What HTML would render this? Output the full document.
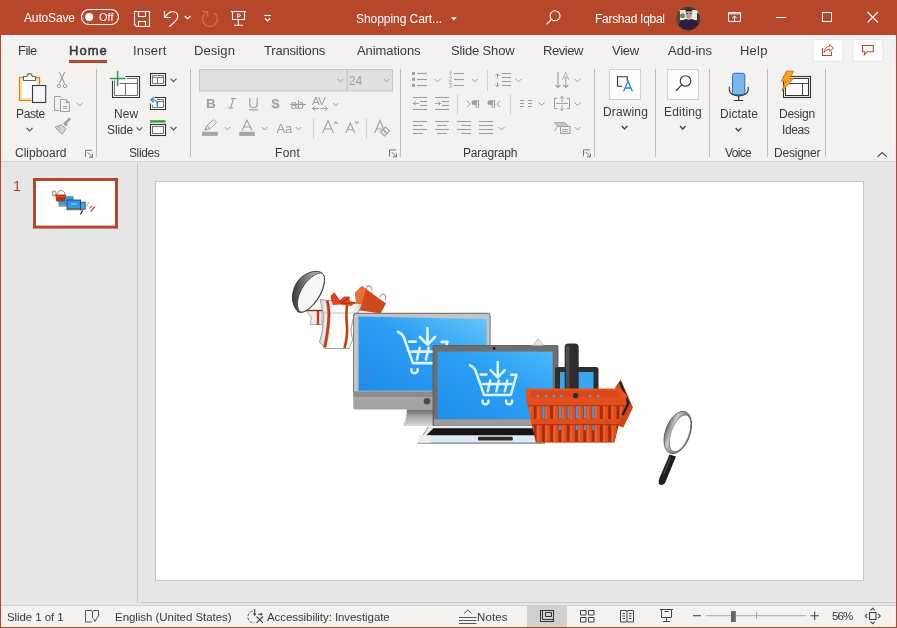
<!DOCTYPE html>
<html><head><meta charset="utf-8">
<style>
*{margin:0;padding:0;box-sizing:border-box}
html,body{width:897px;height:628px;overflow:hidden;background:#B7472A;font-family:"Liberation Sans",sans-serif}
.t{position:absolute;white-space:pre;line-height:1;will-change:transform}
svg{position:absolute;left:0;top:0;will-change:transform}
</style></head><body>
<svg width="897" height="628" viewBox="0 0 897 628">

<rect x="0" y="0" width="897" height="628" fill="#B7472A"/>
<rect x="1" y="35" width="895" height="126" fill="#F3F2F1"/>
<rect x="1" y="161" width="895" height="1" fill="#D6D4D2"/>
<rect x="1" y="162" width="895" height="443" fill="#E6E6E6"/>
<rect x="1" y="605" width="895" height="1" fill="#D2D0CE"/>
<rect x="1" y="606" width="895" height="21" fill="#F3F2F1"/>
<rect x="137" y="163" width="1" height="440" fill="#C8C8C8"/>
<rect x="140" y="602" width="756" height="1" fill="#C8C8C8"/>
<rect x="155.5" y="181.5" width="708" height="399" fill="#fff" stroke="#C6C6C6" stroke-width="1"/>


<defs>
<linearGradient id="scr1" x1="0" y1="1" x2="1" y2="0">
<stop offset="0" stop-color="#1F8BEA"/><stop offset="0.55" stop-color="#2C9EF4"/><stop offset="1" stop-color="#66C8FA"/></linearGradient>
<linearGradient id="scr2" x1="0" y1="1" x2="1" y2="0">
<stop offset="0" stop-color="#1E8EEC"/><stop offset="0.6" stop-color="#2DA0F5"/><stop offset="1" stop-color="#4CB8F8"/></linearGradient>
<linearGradient id="chin" x1="0" y1="0" x2="0" y2="1">
<stop offset="0" stop-color="#7E7E7E"/><stop offset="0.3" stop-color="#9A9A9A"/><stop offset="0.4" stop-color="#B4B4B4"/><stop offset="1" stop-color="#A2A2A2"/></linearGradient>
<linearGradient id="stand" x1="0" y1="0" x2="0" y2="1">
<stop offset="0" stop-color="#6C6C6C"/><stop offset="0.5" stop-color="#B0B0B0"/><stop offset="1" stop-color="#D8D8D8"/></linearGradient>
<linearGradient id="lid" x1="0" y1="0" x2="1" y2="0">
<stop offset="0" stop-color="#3E3E3E"/><stop offset="0.5" stop-color="#9A9A9A"/><stop offset="1" stop-color="#E8E8E8"/></linearGradient>
<linearGradient id="orng" x1="0" y1="0" x2="0" y2="1">
<stop offset="0" stop-color="#F05A22"/><stop offset="1" stop-color="#C8380F"/></linearGradient>
</defs>
<!-- gift lid (open, tilted) -->
<linearGradient id="lidg" x1="0" y1="0" x2="1" y2="0"><stop offset="0" stop-color="#3A3A3A"/><stop offset="0.5" stop-color="#8A8A8A"/><stop offset="1" stop-color="#D0D0D0"/></linearGradient>
<path d="M296 309 C289 300 293 283 303 276 C310 271 318 270 322 273 C327 277 324 290 318 299 C312 308 304 314 298 312 Z" fill="url(#lidg)" stroke="#222" stroke-width="0.8"/>
<path d="M299.5 311.5 C295.5 306 297.5 294 304.5 284.5 C310.5 276.5 318.5 271.5 322.5 273.5 C326.5 276.5 324 289 318 298 C312 307 304.5 314 299.5 311.5 Z" fill="#F7F7F7" stroke="#333" stroke-width="0.8"/>
<!-- small box piece left -->
<path d="M306.5 310.5 H322 V324.5 H310 L311.5 318 Z" fill="#EDEDED" stroke="#777" stroke-width="0.6"/>
<path d="M305.5 310.5 H322" stroke="#9A2C10" stroke-width="1.4"/>
<rect x="316.8" y="311" width="2.4" height="14" fill="#C2401A"/>
<!-- orange bag -->
<path d="M362 286 L386 303.5 L380.5 313.5 L357 310 L355 293 Z" fill="#CF4A1A"/>
<path d="M355 293 L362 286 L366 289 L360 310 L357 310 Z" fill="#EE6C36"/>
<path d="M366.5 289 C366.5 284.5 371.5 284 372 290.5 M380 297.5 C381 292.5 386.5 293 385.5 300" fill="none" stroke="#9A9A9A" stroke-width="1.1"/>
<!-- gift box -->
<linearGradient id="boxg" x1="0" y1="0" x2="1" y2="0"><stop offset="0" stop-color="#D8D8D8"/><stop offset="0.3" stop-color="#FAFAFA"/><stop offset="0.75" stop-color="#FFFFFF"/><stop offset="1" stop-color="#CFCFCF"/></linearGradient>
<path d="M320 299.5 L362 304 L358 313.5 L353 319 L351 330 L352.5 340 L349 348.5 L325 348.5 L319.5 342 L322.5 330 L323.5 315 Z" fill="url(#boxg)" stroke="#7A7A7A" stroke-width="0.7"/>
<path d="M323.5 313 H357.5" stroke="#B8B8B8" stroke-width="0.8"/>
<path d="M327 300.5 C328.5 306 329 313 328.5 320 C328 330 326 340 324.5 347.5" fill="none" stroke="#C63E16" stroke-width="2.6"/>
<path d="M347 304.5 C346.5 310 346 318 347 326 C347.5 334 346.5 341 344.5 348" fill="none" stroke="#C63E16" stroke-width="2.6"/>
<path d="M327 300.5 C328.5 306 329 313 328.5 320 C328 330 326 340 324.5 347.5" fill="none" stroke="#7A1E08" stroke-width="0.5" transform="translate(1.3 0)"/>
<path d="M330.5 296 L334 292.5 L339.5 300.5 L344 296.5 L349 296.5 L350 301 L356 302.5 L351 306 L341 304.5 L333 305 L331 300 Z" fill="#E2441C"/>
<path d="M334 292.5 L340.5 302.5 M350 297 L341 303.5 M356 302.5 L341 303.8" fill="none" stroke="#A02A0C" stroke-width="0.8"/>
<!-- monitor -->
<path d="M356 312.8 H488 Q490.5 313 490.5 316 L490 407 Q490 409.6 487 409.6 H356 Q353.2 409.6 353.2 407 V316 Q353.2 312.8 356 312.8 Z" fill="url(#chin)"/>
<path d="M355 313.5 H489 L490 316 V392 H353.5 V316 Z" fill="#C4C4C4" stroke="#707070" stroke-width="0.8"/>
<path d="M358.5 316.4 L486.5 319 L487.5 390.8 L358.5 390.8 Z" fill="url(#scr1)"/>
<path d="M353.5 392 H490 V397 H353.5 Z" fill="#8C8C8C"/>
<circle cx="427" cy="401.3" r="3.3" fill="#4A4A4A"/>
<path d="M407 409.6 H434 V426 H403 L406 418 Z" fill="url(#stand)"/>
<g transform="translate(398.1 331.9) scale(1.06) translate(-470 -365.4)" fill="none" stroke="#DDF4FF" stroke-width="2.5" stroke-linecap="round" stroke-linejoin="round">
<path d="M470 365.4 Q474.5 367 476 372 L484 394.9 H510.8 L516.5 374.8 H511"/>
<path d="M480.6 374.6 H486.6 M497.7 362 V377.5 M490.6 370.2 L497.7 377.5 L504.8 370.2 M482.8 384 H511.5 M490.3 380.4 L487.8 391.3 M498.8 380.4 L496.3 391.3 M507.3 380.4 L504.8 391.3"/>
<path d="M482.6 400.6 A3 3 0 1 0 488.4 400.6 M506.2 400.6 A3 3 0 1 0 512 400.6"/>
</g>
<!-- laptop lid -->
<rect x="433" y="345.5" width="125" height="80.5" rx="1" fill="#6E6E6E"/>
<rect x="433" y="345.5" width="125" height="80.5" rx="1" fill="none" stroke="#555" stroke-width="0.8"/>
<rect x="437.6" y="351.6" width="115" height="67.5" fill="url(#scr2)"/>
<rect x="434" y="419.2" width="123" height="6.5" fill="#9C9C9C"/>
<circle cx="494.2" cy="348.4" r="1.3" fill="#111"/>
<path d="M532.3 345.5 L538.3 338.8 L544.3 345.5 Z" fill="#E4E4E4" stroke="#9A9A9A" stroke-width="0.6"/>
<g transform="translate(470 365.4) scale(1.0) translate(-470 -365.4)" fill="none" stroke="#DDF4FF" stroke-width="2.5" stroke-linecap="round" stroke-linejoin="round">
<path d="M470 365.4 Q474.5 367 476 372 L484 394.9 H510.8 L516.5 374.8 H511"/>
<path d="M480.6 374.6 H486.6 M497.7 362 V377.5 M490.6 370.2 L497.7 377.5 L504.8 370.2 M482.8 384 H511.5 M490.3 380.4 L487.8 391.3 M498.8 380.4 L496.3 391.3 M507.3 380.4 L504.8 391.3"/>
<path d="M482.6 400.6 A3 3 0 1 0 488.4 400.6 M506.2 400.6 A3 3 0 1 0 512 400.6"/>
</g>
<!-- laptop base -->
<path d="M428.5 426 H545 V443.3 H417.8 Z" fill="#DCE9F5"/>
<path d="M417.8 443.3 L428.5 426.5" stroke="#9A9A9A" stroke-width="1"/>
<path d="M433.4 428.3 H545 V435.3 H426.4 Z" fill="#141414"/>
<path d="M428 426.6 H545" stroke="#F4F4F4" stroke-width="1.2"/>
<rect x="418" y="442.4" width="127" height="1.4" fill="#8E8E8E"/>
<rect x="477.9" y="436.8" width="35" height="3.6" rx="1.5" fill="#2A2A2A"/>
<rect x="418" y="435.3" width="13" height="7.5" fill="#EDEDED"/>
<!-- tablet behind basket -->
<rect x="555" y="367" width="43.5" height="30" rx="2.5" fill="#2E2E2E"/>
<rect x="560" y="372" width="33.5" height="25" fill="#39A6F0"/>
<!-- basket handle -->
<rect x="564.7" y="343.5" width="14" height="48" rx="4" fill="#2C2C2C"/>
<rect x="566" y="346" width="3.5" height="43" fill="#4E4E4E"/>
<!-- basket right flap -->
<path d="M615.4 387.3 L620.7 379.4 L633 407.4 L623.3 427.6 L613 424 Z" fill="#D24618"/>
<path d="M620 382 L628.5 403 L622.5 415" fill="none" stroke="#1E1E1E" stroke-width="2.4"/>
<!-- basket body -->
<clipPath id="bask"><path d="M527.5 404 H624 L614.3 442.4 H535.8 Z"/></clipPath>
<g clip-path="url(#bask)">
<rect x="520" y="400" width="110" height="45" fill="#A42E0C"/>
<rect x="542.3" y="406" width="2.4" height="12.5" fill="#3C9EEA"/><rect x="559" y="406" width="2.4" height="12.5" fill="#3C9EEA"/><rect x="567.3" y="406" width="2.4" height="12.5" fill="#3C9EEA"/><rect x="575.6" y="406" width="2.4" height="12.5" fill="#3C9EEA"/><rect x="583.9" y="406" width="2.4" height="12.5" fill="#3C9EEA"/><rect x="592.2" y="406" width="2.4" height="12.5" fill="#3C9EEA"/><rect x="559" y="425" width="2.4" height="5" fill="#3C9EEA"/><rect x="575.6" y="425" width="2.4" height="5" fill="#3C9EEA"/><rect x="583.9" y="425" width="2.4" height="5" fill="#3C9EEA"/><rect x="592.2" y="425" width="2.4" height="5" fill="#3C9EEA"/>
<rect x="528.5" y="405" width="5.4" height="37.5" fill="#E44E1C"/><rect x="529.2" y="405" width="1.6" height="37.5" fill="#F26C36" opacity="0.75"/><rect x="536.5" y="405" width="5.4" height="37.5" fill="#E44E1C"/><rect x="537.2" y="405" width="1.6" height="37.5" fill="#F26C36" opacity="0.75"/><rect x="544.8" y="405" width="5.4" height="37.5" fill="#E44E1C"/><rect x="545.5" y="405" width="1.6" height="37.5" fill="#F26C36" opacity="0.75"/><rect x="553" y="405" width="5.4" height="37.5" fill="#E44E1C"/><rect x="553.7" y="405" width="1.6" height="37.5" fill="#F26C36" opacity="0.75"/><rect x="561.3" y="405" width="5.4" height="37.5" fill="#E44E1C"/><rect x="562.0" y="405" width="1.6" height="37.5" fill="#F26C36" opacity="0.75"/><rect x="569.6" y="405" width="5.4" height="37.5" fill="#E44E1C"/><rect x="570.3000000000001" y="405" width="1.6" height="37.5" fill="#F26C36" opacity="0.75"/><rect x="577.9" y="405" width="5.4" height="37.5" fill="#E44E1C"/><rect x="578.6" y="405" width="1.6" height="37.5" fill="#F26C36" opacity="0.75"/><rect x="586.2" y="405" width="5.4" height="37.5" fill="#E44E1C"/><rect x="586.9000000000001" y="405" width="1.6" height="37.5" fill="#F26C36" opacity="0.75"/><rect x="594.5" y="405" width="5.4" height="37.5" fill="#E44E1C"/><rect x="595.2" y="405" width="1.6" height="37.5" fill="#F26C36" opacity="0.75"/><rect x="602.8" y="405" width="5.4" height="37.5" fill="#E44E1C"/><rect x="603.5" y="405" width="1.6" height="37.5" fill="#F26C36" opacity="0.75"/><rect x="611.1" y="405" width="5.4" height="37.5" fill="#E44E1C"/><rect x="611.8000000000001" y="405" width="1.6" height="37.5" fill="#F26C36" opacity="0.75"/><rect x="619.4" y="405" width="5.4" height="37.5" fill="#E44E1C"/><rect x="620.1" y="405" width="1.6" height="37.5" fill="#F26C36" opacity="0.75"/>
</g>
<path d="M525.3 388.5 H621 L627 396 L624.5 405 H527.5 Z" fill="#E65420"/>
<path d="M531 390.5 H618 L621 397.3 H529 Z" fill="#D8481A"/>
<g fill="#4AA2E8"><rect x="536.5" y="395" width="2.5" height="2"/><rect x="545" y="395" width="2.5" height="2"/><rect x="552.5" y="395" width="2.5" height="2"/><rect x="560" y="395" width="2.5" height="2"/><rect x="589" y="395" width="2.5" height="2"/><rect x="597" y="395" width="2.5" height="2"/></g>
<path d="M525.8 397.3 H626 L624 405 H527.5 Z" fill="#E24E1C"/>
<path d="M527.5 405 H624 L623.3 406.3 H528 Z" fill="#B8380F"/>
<path d="M530.5 419 H620.5 L619.3 424.2 H531.8 Z" fill="#E04C1C"/>
<path d="M531.8 424.2 H619.3 L619 425.2 H532 Z" fill="#A82E0C"/>
<circle cx="575.7" cy="395.7" r="2.6" fill="#2A2A2A"/>
<!-- magnifier bottom right -->
<linearGradient id="ringg" x1="0" y1="0" x2="1" y2="0"><stop offset="0" stop-color="#6E6E6E"/><stop offset="0.25" stop-color="#C8C8C8"/><stop offset="0.45" stop-color="#9A9A9A"/><stop offset="1" stop-color="#555"/></linearGradient>
<g transform="rotate(20 677.8 432.5)">
<ellipse cx="677.8" cy="432.5" rx="12.3" ry="22" fill="url(#ringg)" stroke="#444" stroke-width="0.7"/>
<ellipse cx="680.2" cy="432.5" rx="9" ry="19.3" fill="#fff" stroke="#666" stroke-width="0.6"/>
</g>
<path d="M669.5 454.5 L676 456.5 L665 483 Q662 486.5 659 484 Q658 481 659.5 478 Z" fill="#1E1E1E"/>
<path d="M670.5 457 L664 474" stroke="#555" stroke-width="1"/>

<rect x="81.5" y="9.5" width="37" height="15" rx="7.5" fill="none" stroke="#fff" stroke-width="1.2"/><circle cx="89.2" cy="17" r="4" fill="#fff"/><path d="M134.5 11.5 H149.5 V26.5 H136.5 L134.5 24.5 Z M138.5 11.5 V16.5 H145.5 V11.5 M138.5 26.5 V21.5 H145.5 V26.5" fill="none" stroke="#fff" stroke-width="1.1"/><path d="M164.5 11 V17.5 H171" fill="none" stroke="#fff" stroke-width="1.15"/><path d="M165 17.2 C167.5 13.5 170 11.6 172.6 11.6 C175.6 11.6 177.8 13.8 177.8 16.5 C177.8 18.6 176.6 20 175 21.6 L169.4 26.5" fill="none" stroke="#fff" stroke-width="1.15"/><path d="M184.7 16.099999999999998 L187.6 18.7 L190.5 16.099999999999998" fill="none" stroke="#fff" stroke-width="1.3"/><path d="M214.2 12.9 A7.4 7.4 0 1 1 207.3 12" fill="none" stroke="#E46A50" stroke-width="1.2"/><path d="M202.2 11.5 H207.7 V16.8" fill="none" stroke="#E46A50" stroke-width="1.2"/><path d="M231 11.5 H246 M232.5 11.5 V19.5 H244.5 V11.5 M238.3 19.5 V25.2 M234 25.2 H243" fill="none" stroke="#fff" stroke-width="1.1"/><path d="M237.6 13.6 L240.8 15.5 L237.6 17.4 Z" fill="none" stroke="#fff" stroke-width="0.9"/><path d="M264.3 15.5 H271" stroke="#fff" stroke-width="1.1"/><path d="M264.90000000000003 18.2 L267.6 20.8 L270.3 18.2" fill="none" stroke="#fff" stroke-width="1.2"/><path d="M451 17.2 H456.8 L453.9 20.4 Z" fill="#fff"/><circle cx="555" cy="15.8" r="5" fill="none" stroke="#fff" stroke-width="1.1"/><path d="M551.4 19.4 L546.5 24.3" stroke="#fff" stroke-width="1.2"/><defs><clipPath id="av"><circle cx="688.2" cy="18.5" r="11.8"/></clipPath></defs>
<g clip-path="url(#av)">
<rect x="676" y="6" width="25" height="25" fill="#4A3C30"/>
<rect x="679" y="10" width="20" height="10" fill="#E8E8E4"/>
<rect x="676" y="11" width="4" height="16" fill="#5A4632"/>
<rect x="697" y="13" width="4" height="12" fill="#3C3C38"/>
<circle cx="682.5" cy="15.8" r="2.5" fill="#6E8A5A"/>
<rect x="686" y="10" width="1" height="8" fill="#cfcfcf"/>
<ellipse cx="688.8" cy="14.8" rx="3" ry="4" fill="#B89A88"/>
<path d="M685.3 12.5 Q686 8.5 689 8.8 Q692.5 9 692.3 12.8 L691.5 11.5 Q689 10.5 686 11.8 Z" fill="#1E1A1E"/>
<path d="M686 13.5 H688 M689.8 13.5 H691.8" stroke="#333" stroke-width="0.8"/>
<path d="M677 31 Q678 20.5 686 19 L688.8 19.8 L691.5 19 Q699.5 20.5 700.5 31 Z" fill="#2C1E3C"/>
</g><path d="M728.5 12.5 H740.5 V21.5 H728.5 Z M728.5 13.8 H740.5 M734.5 21.5 V16 M732.3 18.2 L734.5 16 L736.7 18.2" fill="none" stroke="#fff" stroke-width="1"/><path d="M776 17.5 H786" stroke="#fff" stroke-width="1"/><rect x="822.5" y="12.5" width="9" height="9" fill="none" stroke="#fff" stroke-width="1"/><path d="M867.5 12 L878 22.5 M878 12 L867.5 22.5" stroke="#fff" stroke-width="1.1"/><rect x="69" y="60" width="38" height="3" fill="#B7472A"/><rect x="813" y="39.3" width="30" height="22" rx="2.5" fill="#fff" stroke="#E1DFDD" stroke-width="0.8"/><rect x="852.8" y="39.3" width="30" height="22" rx="2.5" fill="#fff" stroke="#E1DFDD" stroke-width="0.8"/><path d="M822.5 48 V55.5 H831.5 V51.7" fill="none" stroke="#B7472A" stroke-width="1.1"/><path d="M824.3 52.2 C824.6 48.2 827 46.3 829.8 46.3 V44.4 L833.4 48.2 L829.8 51.3 V49.4 C827.6 49.4 825.8 50.2 824.3 52.2 Z" fill="none" stroke="#B7472A" stroke-width="1"/><path d="M862.5 45.5 H873.3 V51.8 H867.2 L864.4 54.6 V51.8 H862.5 Z" fill="none" stroke="#B7472A" stroke-width="1.1"/><rect x="96" y="69" width="1" height="88" fill="#BFBDBB"/><rect x="190" y="69" width="1" height="88" fill="#BFBDBB"/><rect x="400" y="69" width="1" height="88" fill="#BFBDBB"/><rect x="594" y="69" width="1" height="88" fill="#BFBDBB"/><rect x="655" y="69" width="1" height="88" fill="#BFBDBB"/><rect x="709" y="69" width="1" height="88" fill="#BFBDBB"/><rect x="767" y="69" width="1" height="88" fill="#BFBDBB"/><rect x="825" y="69" width="1" height="88" fill="#BFBDBB"/><rect x="19.5" y="77.5" width="20" height="23" fill="#FDFDFD" stroke="#E37A06" stroke-width="1.1"/><rect x="21" y="79" width="17" height="20" fill="none" stroke="#F9D58A" stroke-width="1.6"/><path d="M23.5 80.5 V76.5 H26.8 C27.2 72.6 31.8 72.6 32.2 76.5 H35.5 V80.5 Z" fill="#FDFDFD" stroke="#666" stroke-width="1.1"/><rect x="31.5" y="84.5" width="15.2" height="19" fill="#FDFDFD"/><rect x="32.5" y="85.5" width="13.2" height="17" fill="#F8F8F8" stroke="#3A3A3A" stroke-width="1.15"/><path d="M26.6 127.80000000000001 L29.6 130.8 L32.6 127.80000000000001" fill="none" stroke="#555" stroke-width="1.2"/><path d="M59.3 72 L64.6 83.6 M64.7 72 L59.4 83.6" fill="none" stroke="#A19F9D" stroke-width="1.1"/><circle cx="58.9" cy="86" r="1.7" fill="none" stroke="#A19F9D" stroke-width="1"/><circle cx="65.1" cy="86" r="1.7" fill="none" stroke="#A19F9D" stroke-width="1"/><path d="M59.5 110.5 H54.5 V96.5 H60.5 L61.5 97.5" fill="#EEEDEC" stroke="#A19F9D" stroke-width="1"/><path d="M60.5 99.5 H66 L69.5 103 V111.5 H60.5 Z" fill="#F3F2F1" stroke="#A19F9D" stroke-width="1"/><path d="M66 99.5 V103 H69.5 Z" fill="#A19F9D"/><path d="M63 106.5 H67.2 M63 108.5 H67.2" stroke="#A19F9D" stroke-width="0.9"/><path d="M76.7 102.8 L79.7 105.8 L82.7 102.8" fill="none" stroke="#A19F9D" stroke-width="1"/><path d="M61.5 124.5 L66 129 L62 134.2 L55 127.2 Z" fill="#D6D4D2" stroke="#A19F9D" stroke-width="1"/><path d="M58.5 130.7 L61 128.2 M56.8 128.8 L60 125.8" stroke="#A19F9D" stroke-width="0.8"/><path d="M63 123.5 L65 121.5 L68 124.5 L66 126.5 Z" fill="#A19F9D"/><path d="M66 122.5 L69.6 118.9" stroke="#A19F9D" stroke-width="2.4" stroke-linecap="round"/><path d="M85.5 156.8 V150.3 H92 M87.5 152.3 L92.5 157.3 M92.5 153.8 V157.3 H89" fill="none" stroke="#777" stroke-width="1"/><rect x="113" y="77" width="26" height="20" fill="#FDFDFD"/><path d="M125.5 76.5 H139.5 V97.5 H112.5 V80.8" fill="none" stroke="#333" stroke-width="1.1"/><path d="M127 78.5 H137.5 V95.5 H114.5 V80.5 M119.5 83.5 H137.5 M125.5 83.5 V95.5" fill="none" stroke="#6E6E6E" stroke-width="1"/><path d="M117.6 70.5 V86.5 M109.5 78.5 H126" stroke="#F3F2F1" stroke-width="3.4"/><path d="M117.6 71 V86 M110 78.5 H125.5" stroke="#2E9E48" stroke-width="1.5"/><path d="M136.75 127.30000000000001 L139.5 130.3 L142.25 127.30000000000001" fill="none" stroke="#555" stroke-width="1.1"/><rect x="150.5" y="73.5" width="15" height="12" fill="#FDFDFD" stroke="#333" stroke-width="1.1"/><path d="M152.5 75.5 H163.5 V83.5 H152.5 Z M152.5 77.5 H163.5 M157.5 77.5 V83.5" fill="none" stroke="#666" stroke-width="0.9"/><path d="M170.5 78.7 L173.5 81.7 L176.5 78.7" fill="none" stroke="#555" stroke-width="1.1"/><path d="M154.5 97.5 H165.5 V109.5 H150.5 V103.5" fill="#FDFDFD" stroke="#333" stroke-width="1.1"/><path d="M157 99.5 H163.5 V107.5 H152.5 V105 M157 101.5 H163.5 M157.5 101.5 V107.5" fill="none" stroke="#666" stroke-width="0.9"/><path d="M157.2 106 C157.5 101 155.5 99.3 151.5 99.8 M153.8 97.2 L151 99.8 L153.8 102.4" fill="none" stroke="#2E86D8" stroke-width="1.3"/><rect x="150" y="120.2" width="15.5" height="2.4" fill="#2E9C45"/><rect x="150.5" y="124.5" width="15" height="11" fill="#FDFDFD" stroke="#333" stroke-width="1.1"/><rect x="152.5" y="126.5" width="11" height="7" fill="none" stroke="#666" stroke-width="0.9"/><path d="M170.5 127.0 L173.5 130.0 L176.5 127.0" fill="none" stroke="#555" stroke-width="1.1"/><rect x="199.5" y="69.5" width="147.5" height="21.5" fill="#E1E0DF" stroke="#C8C6C4" stroke-width="1"/><rect x="347.5" y="69.5" width="45" height="21.5" fill="#E1E0DF" stroke="#C8C6C4" stroke-width="1"/><path d="M337.65 79.0 L340.4 82.0 L343.15 79.0" fill="none" stroke="#A19F9D" stroke-width="1"/><path d="M383.75 79.0 L386.5 82.0 L389.25 79.0" fill="none" stroke="#A19F9D" stroke-width="1"/><text x="206" y="108" font-family="Liberation Sans" font-weight="700" font-size="13.5" fill="#A19F9D">B</text><path d="M231 98.5 H236 M228.2 108 H233.2 M233.6 98.5 L230.6 108" fill="none" stroke="#A19F9D" stroke-width="1.1"/><path d="M249.8 98.3 V104.5 C249.8 108.5 257.2 108.5 257.2 104.5 V98.3 M249 109.8 H258" fill="none" stroke="#A19F9D" stroke-width="1.2"/><text x="271.6" y="108.6" font-family="Liberation Sans" font-weight="700" font-size="13" fill="#D8D6D4">S</text><text x="271" y="108" font-family="Liberation Sans" font-weight="700" font-size="13" fill="#A19F9D">S</text><text x="290.5" y="108.6" font-family="Liberation Sans" font-size="12.5" fill="#A19F9D" letter-spacing="-0.5">ab</text><path d="M290 104.5 H306" stroke="#A19F9D" stroke-width="1.1"/><text x="312" y="105" font-family="Liberation Sans" font-size="11.5" fill="#A19F9D" letter-spacing="-0.8">AV</text><path d="M312.5 108.5 H319.3 M314.8 106.3 L312.5 108.5 L314.8 110.7 M320.7 108.5 H327.5 M325.2 106.3 L327.5 108.5 L325.2 110.7" fill="none" stroke="#A19F9D" stroke-width="1"/><path d="M333.2 103.1 L335.7 105.9 L338.2 103.1" fill="none" stroke="#A19F9D" stroke-width="1"/><rect x="202" y="131.8" width="15.8" height="4.1" fill="#A8A6A4"/><path d="M205.5 130 L207 125.5 L213.5 119.8 L216.5 122.5 L210.2 128.5 Z M207 125.5 L210.2 128.5" fill="none" stroke="#A19F9D" stroke-width="1"/><path d="M204 130.5 L205.5 127.5 L208 130 Z" fill="#A19F9D"/><path d="M224.75 127.0 L227.5 130.0 L230.25 127.0" fill="none" stroke="#A19F9D" stroke-width="1"/><rect x="239.3" y="131.8" width="15.5" height="4.1" fill="#A8A6A4"/><path d="M242 130.5 L247 120.3 L252 130.5 M243.7 127 H250.3" fill="none" stroke="#A19F9D" stroke-width="1.1"/><path d="M261.85 127.0 L264.6 130.0 L267.35 127.0" fill="none" stroke="#A19F9D" stroke-width="1"/><text x="276.5" y="132.7" font-family="Liberation Sans" font-size="13" fill="#A19F9D" letter-spacing="-0.2">Aa</text><path d="M295.75 127.0 L298.5 130.0 L301.25 127.0" fill="none" stroke="#A19F9D" stroke-width="1"/><rect x="313" y="118.3" width="1" height="20.500000000000014" fill="#D2D0CE"/><path d="M322.5 133 L328 120.5 L333.5 133 M324.3 129 H331.7 M334 124 L335.8 121.8 L337.6 124" fill="none" stroke="#A19F9D" stroke-width="1.1"/><path d="M345.8 133 L350.3 123 L354.8 133 M347.4 129.8 H353.2 M355 121.3 L356.8 123.5 L358.6 121.3" fill="none" stroke="#A19F9D" stroke-width="1.1"/><rect x="366" y="118.3" width="1" height="20.500000000000014" fill="#D2D0CE"/><path d="M374.8 133 L380 120.5 L385.2 133 M376.5 129 H382" fill="none" stroke="#A19F9D" stroke-width="1.1"/><path d="M380.5 132 L385.5 127 L389.5 131 L384.5 136 Z M383 129.5 L387 133.5" fill="none" stroke="#A19F9D" stroke-width="1.1"/><path d="M389.5 156.4 V149.9 H396 M391.5 151.9 L396.5 156.9 M396.5 153.4 V156.9 H393" fill="none" stroke="#777" stroke-width="1"/><rect x="412" y="71.9" width="3" height="3" fill="#A19F9D"/><rect x="412" y="77.8" width="3" height="3" fill="#A19F9D"/><rect x="412" y="83.8" width="3" height="3" fill="#A19F9D"/><path d="M417 73.5 H427" stroke="#A19F9D" stroke-width="1.1"/><path d="M417 79.5 H427" stroke="#A19F9D" stroke-width="1.1"/><path d="M417 85.5 H427" stroke="#A19F9D" stroke-width="1.1"/><path d="M434.6 78.8 L437.6 81.8 L440.6 78.8" fill="none" stroke="#A19F9D" stroke-width="1"/><path d="M449.6 72.4 L450.8 71.5 V75.3 M449.2 77.8 C449.6 76.6 451.8 76.6 451.8 78 C451.8 79 449.2 80.2 449.2 81.2 H452 M449.2 83.4 H451.6 L450.2 85 C452.4 85 452.4 87.6 449.2 87.2" fill="none" stroke="#A19F9D" stroke-width="0.8"/><path d="M454 73.5 H464" stroke="#A19F9D" stroke-width="1.1"/><path d="M454 79.5 H464" stroke="#A19F9D" stroke-width="1.1"/><path d="M454 85.5 H464" stroke="#A19F9D" stroke-width="1.1"/><path d="M471.7 78.8 L474.7 81.8 L477.7 78.8" fill="none" stroke="#A19F9D" stroke-width="1"/><rect x="487" y="70.4" width="1" height="20.299999999999997" fill="#D2D0CE"/><path d="M497.5 74 V78.5 M497.5 82 V86.5 M495.3 76 L497.5 73.8 L499.7 76 M495.3 84.5 L497.5 86.7 L499.7 84.5" fill="none" stroke="#A19F9D" stroke-width="1"/><path d="M502 73.5 H511" stroke="#A19F9D" stroke-width="1.1"/><path d="M502 77.5 H511" stroke="#A19F9D" stroke-width="1.1"/><path d="M502 81.5 H511" stroke="#A19F9D" stroke-width="1.1"/><path d="M502 85.5 H511" stroke="#A19F9D" stroke-width="1.1"/><path d="M515.6 78.8 L518.6 81.8 L521.6 78.8" fill="none" stroke="#A19F9D" stroke-width="1"/><path d="M558 72 V87.5 M555.5 85 L558 87.5 L560.5 85 M565.8 77 V87.5 M563.3 85 L565.8 87.5 L568.3 85" fill="none" stroke="#A19F9D" stroke-width="1.1"/><path d="M562.5 80 L565.7 72 L568.9 80 M563.6 77.3 H567.8" fill="none" stroke="#B8B6B4" stroke-width="1"/><path d="M574.5 78.8 L577.5 81.8 L580.5 78.8" fill="none" stroke="#A19F9D" stroke-width="1"/><path d="M413 97.5 H427" stroke="#A19F9D" stroke-width="1.1"/><path d="M413 109.5 H427" stroke="#A19F9D" stroke-width="1.1"/><path d="M420 101.5 H427" stroke="#A19F9D" stroke-width="1.1"/><path d="M420 105.5 H427" stroke="#A19F9D" stroke-width="1.1"/><path d="M419 103.4 H413.5 M415.8 101.1 L413.5 103.4 L415.8 105.7" fill="none" stroke="#A19F9D" stroke-width="1"/><path d="M435 97.5 H449" stroke="#A19F9D" stroke-width="1.1"/><path d="M435 109.5 H449" stroke="#A19F9D" stroke-width="1.1"/><path d="M442 101.5 H449" stroke="#A19F9D" stroke-width="1.1"/><path d="M442 105.5 H449" stroke="#A19F9D" stroke-width="1.1"/><path d="M435 103.4 H440.5 M438.2 101.1 L440.5 103.4 L438.2 105.7" fill="none" stroke="#A19F9D" stroke-width="1"/><rect x="457" y="94.3" width="1" height="20.299999999999997" fill="#D2D0CE"/><path d="M467 100.8 L470 104 L467 107.2 M500 100.8 L497 104 L500 107.2" fill="none" stroke="#A19F9D" stroke-width="1"/><path d="M476.6 100.3 H473.8 A2.4 2.4 0 0 0 473.8 105.1 H476.6 Z M492.6 100.3 H489.8 A2.4 2.4 0 0 0 489.8 105.1 H492.6 Z" fill="#A19F9D"/><rect x="475.6" y="100.3" width="1.2" height="7.7" fill="#A19F9D"/><rect x="477.9" y="100.3" width="1.2" height="7.7" fill="#A19F9D"/><rect x="476.6" y="100.3" width="2.5" height="1" fill="#A19F9D"/><rect x="491.6" y="100.3" width="1.2" height="7.7" fill="#A19F9D"/><rect x="493.9" y="100.3" width="1.2" height="7.7" fill="#A19F9D"/><rect x="492.6" y="100.3" width="2.5" height="1" fill="#A19F9D"/><rect x="510" y="94.4" width="1" height="20.299999999999997" fill="#D2D0CE"/><path d="M520 100.5 H524" stroke="#A19F9D" stroke-width="1"/><path d="M520 103.5 H524" stroke="#A19F9D" stroke-width="1"/><path d="M520 106.5 H524" stroke="#A19F9D" stroke-width="1"/><path d="M528 100.5 H532" stroke="#A19F9D" stroke-width="1"/><path d="M528 103.5 H532" stroke="#A19F9D" stroke-width="1"/><path d="M528 106.5 H532" stroke="#A19F9D" stroke-width="1"/><path d="M538.7 102.3 L541.7 105.3 L544.7 102.3" fill="none" stroke="#A19F9D" stroke-width="1"/><path d="M557.5 98.3 H554.5 V108.5 H557.5 M566.5 98.3 H569.5 V108.5 H566.5 M556 103.4 H568 M562 96.5 V102 M559.8 98.6 L562 96.3 L564.2 98.6 M562 105 V110.5 M559.8 108.3 L562 110.6 L564.2 108.3" fill="none" stroke="#A19F9D" stroke-width="1"/><path d="M574.5 102.5 L577.5 105.5 L580.5 102.5" fill="none" stroke="#A19F9D" stroke-width="1"/><path d="M413 121.5 H427" stroke="#A19F9D" stroke-width="1.1"/><path d="M413 129.5 H427" stroke="#A19F9D" stroke-width="1.1"/><path d="M413 125.5 H423" stroke="#A19F9D" stroke-width="1.1"/><path d="M413 133.5 H423" stroke="#A19F9D" stroke-width="1.1"/><path d="M435 121.5 H449" stroke="#A19F9D" stroke-width="1.1"/><path d="M435 129.5 H449" stroke="#A19F9D" stroke-width="1.1"/><path d="M437 125.5 H447" stroke="#A19F9D" stroke-width="1.1"/><path d="M437 133.5 H447" stroke="#A19F9D" stroke-width="1.1"/><path d="M457 121.5 H471" stroke="#A19F9D" stroke-width="1.1"/><path d="M457 129.5 H471" stroke="#A19F9D" stroke-width="1.1"/><path d="M461 125.5 H471" stroke="#A19F9D" stroke-width="1.1"/><path d="M461 133.5 H471" stroke="#A19F9D" stroke-width="1.1"/><path d="M479 121.5 H493" stroke="#A19F9D" stroke-width="1.1"/><path d="M479 125.5 H493" stroke="#A19F9D" stroke-width="1.1"/><path d="M479 129.5 H493" stroke="#A19F9D" stroke-width="1.1"/><path d="M479 133.5 H493" stroke="#A19F9D" stroke-width="1.1"/><path d="M498.5 127.0 L501.5 130.0 L504.5 127.0" fill="none" stroke="#A19F9D" stroke-width="1"/><path d="M554.5 122.5 H565 L568.5 126.5 H557.5 Z" fill="#C8C6C4" stroke="#A19F9D" stroke-width="0.8"/><path d="M554.5 131 L557.5 126.5" stroke="#A19F9D" stroke-width="1"/><rect x="560.5" y="126.5" width="9.5" height="7" fill="#F3F2F1" stroke="#A19F9D" stroke-width="1"/><path d="M562 129.5 H568" stroke="#A19F9D" stroke-width="0.9"/><path d="M562 131.5 H568" stroke="#A19F9D" stroke-width="0.9"/><path d="M574.5 127.0 L577.5 130.0 L580.5 127.0" fill="none" stroke="#A19F9D" stroke-width="1"/><path d="M583.5 156.4 V149.9 H590 M585.5 151.9 L590.5 156.9 M590.5 153.4 V156.9 H587" fill="none" stroke="#777" stroke-width="1"/><rect x="609.5" y="69.5" width="31" height="30" fill="#FDFDFD" stroke="#D2D0CE" stroke-width="1"/><path d="M622 86.3 H617.5 V76.8 H627.3 V81" fill="none" stroke="#333" stroke-width="1.1"/><path d="M623.6 91.5 L628 81.2 L632.4 91.5 M625 88 H631" fill="none" stroke="#1E8BCD" stroke-width="1.3"/><path d="M621.85 126.0 L624.6 129.0 L627.35 126.0" fill="none" stroke="#444" stroke-width="1.35"/><rect x="667.5" y="69.5" width="31" height="30" fill="#FDFDFD" stroke="#D2D0CE" stroke-width="1"/><circle cx="685.5" cy="81" r="5.3" fill="#FDFDFD" stroke="#333" stroke-width="1.1"/><path d="M681.7 84.8 L676 90.8" stroke="#333" stroke-width="1.2"/><path d="M680.05 126.0 L682.8 129.0 L685.55 126.0" fill="none" stroke="#444" stroke-width="1.35"/><rect x="732.5" y="73.3" width="12.3" height="21.3" rx="2.2" fill="#7CB7EC" stroke="#1E6FC0" stroke-width="1"/><path d="M729.3 86.7 V89.5 C729.3 98 748.2 98 748.2 89.5 V86.7 M738.7 96 V100.5 M733.8 100.5 H743.2" fill="none" stroke="#333" stroke-width="1.1"/><path d="M735.65 128.0 L738.4 131.0 L741.15 128.0" fill="none" stroke="#444" stroke-width="1.35"/><rect x="783.5" y="76.5" width="27" height="21" fill="none" stroke="#333" stroke-width="1.1"/><rect x="785.5" y="78.5" width="23" height="17" fill="#FDFDFD" stroke="#333" stroke-width="1"/><path d="M785.5 83.5 H808.5 M802.5 83.5 V95.5" stroke="#444" stroke-width="1"/><path d="M786.5 71.2 H793.6 L789.6 78.6 H793.2 L782 90.8 L785.6 81.2 H781.5 Z" fill="#F7A31B" stroke="#E3701A" stroke-width="1"/><path d="M877.5 156.8 L882.2 152.5 L886.9 156.8" fill="none" stroke="#444" stroke-width="1.1"/><rect x="34.5" y="179.5" width="82" height="47.6" fill="#fff" stroke="#B7472A" stroke-width="3"/><text x="13" y="190.7" font-family="Liberation Sans" font-size="14.5" fill="#C43E1C">1</text><path d="M85.5 610.5 H91.5 L92.5 612 L93.5 610.5 H98.5 V616 M85.5 610.5 V622 H92 M92.5 612 V618" fill="none" stroke="#555" stroke-width="1"/><path d="M93.5 618.5 L95 621.5 L99 614.5" fill="none" stroke="#555" stroke-width="1"/><path d="M252.8 611.3 A5.6 5.6 0 0 0 254.5 622.7" fill="none" stroke="#555" stroke-width="1" stroke-dasharray="2.8 1.4"/><path d="M254.7 609 V614.5 M258 614.2 H261" fill="none" stroke="#444" stroke-width="1.1"/><path d="M252.9 613.6 H256.5 L254.7 616.2 Z M260.6 612.4 L263 614.2 L260.6 616 Z" fill="#444"/><path d="M256.5 616.5 L263 622.8 M263 616.5 L256.5 622.8" fill="none" stroke="#444" stroke-width="1.1"/><path d="M459 617.5 H476.5 M459 620.5 H476.5 M459 623.5 H476.5 M464 613.5 L467.8 610 L471.6 613.5" fill="none" stroke="#555" stroke-width="1"/><rect x="527" y="606" width="40" height="21" fill="#D2D0CE"/><rect x="540.5" y="610.5" width="13" height="11" fill="none" stroke="#333" stroke-width="1"/><path d="M542.5 610.5 V619.5 H553.5 M545.5 612.5 H551.5 V616.5 H545.5 Z" fill="none" stroke="#333" stroke-width="1"/><path d="M580.5 610.5 H586 V615 H580.5 Z M588.5 610.5 H594 V615 H588.5 Z M580.5 617.5 H586 V622 H580.5 Z M588.5 617.5 H594 V622 H588.5 Z" fill="none" stroke="#444" stroke-width="1"/><path d="M620.5 610.5 H626.5 L627 611.5 L627.5 610.5 H633.5 V622 H627.5 L627 621 L626.5 622 H620.5 Z M627 611.5 V621 M622.5 613.5 H625 M622.5 616 H625 M622.5 618.5 H625 M629 613.5 H631.5 M629 616 H631.5 M629 618.5 H631.5" fill="none" stroke="#444" stroke-width="1"/><path d="M660 609.5 H673 M661.5 609.5 V617.5 H671.5 V609.5 M666.5 617.5 V621.5 M663 621.5 H670 M664.5 611.5 H668.5" fill="none" stroke="#444" stroke-width="1"/><path d="M693 615.7 H701" stroke="#444" stroke-width="1.1"/><rect x="706" y="615.2" width="100" height="1" fill="#A8A8A8"/><rect x="756" y="612" width="1" height="7" fill="#A8A8A8"/><rect x="731" y="611" width="4.8" height="11" fill="#666"/><path d="M810.5 615.7 H819 M814.7 611.5 V620" stroke="#444" stroke-width="1.1"/><rect x="869.5" y="612.5" width="6.5" height="7" fill="none" stroke="#444" stroke-width="1.1"/><path d="M870.5 610.3 L872.7 608.3 L874.9 610.3 M870.5 621.7 L872.7 623.7 L874.9 621.7 M867.3 613.8 L865.3 616 L867.3 618.2 M878.2 613.8 L880.2 616 L878.2 618.2" fill="none" stroke="#444" stroke-width="1.1"/>
<path d="M57.5 194 C57.5 189.5 64.5 189.5 65 194" fill="none" stroke="#777" stroke-width="0.9"/>
<path d="M52 191.5 L55.5 191 L56.5 195 L52.8 196 Z" fill="#E8E0DC" stroke="#A85A40" stroke-width="0.7"/>
<rect x="58.8" y="196.3" width="14.4" height="9" fill="#2E9EF0" stroke="#5A8AB0" stroke-width="0.5"/>
<rect x="58.8" y="205.2" width="14.4" height="1.6" fill="#999"/>
<path d="M55.2 194.5 H66.2 L65 201.5 H56.3 Z" fill="#B23614"/>
<path d="M56 196.5 H65.5" stroke="#D8562A" stroke-width="0.8"/>
<rect x="67" y="200" width="13.6" height="8.6" fill="#2A98EE" stroke="#333" stroke-width="0.8"/>
<path d="M71 203 L73 205 L75 203 M72 204 H77" stroke="#9ED4FA" stroke-width="0.7" fill="none"/>
<path d="M66.5 208.6 H81 L81.5 210.2 H66 Z" fill="#7A7A7A"/>
<rect x="80.3" y="202.2" width="4.9" height="7" fill="#3AA8F2" stroke="#222" stroke-width="0.7"/>
<path d="M82.7 210.2 L80.4 214.6" stroke="#111" stroke-width="1.1"/>
<path d="M86.8 206.5 L88.6 202.3" stroke="#AAAAAA" stroke-width="1"/>
<path d="M89.5 208.5 L92 205.8 M90.8 211.6 L94.8 206.4" stroke="#B8441E" stroke-width="1.1"/>

</svg>
<div class='t' style='left:24.10px;top:12.20px;font-size:12px;font-weight:400;color:#fff;letter-spacing:-0.143px;'>AutoSave</div>
<div class='t' style='left:99.00px;top:11.95px;font-size:11px;font-weight:400;color:#fff;letter-spacing:0.000px;'>Off</div>
<div class='t' style='left:355.90px;top:12.50px;font-size:12px;font-weight:400;color:#fff;letter-spacing:-0.047px;'>Shopping Cart...</div>
<div class='t' style='left:594.60px;top:12.50px;font-size:12px;font-weight:400;color:#fff;letter-spacing:-0.283px;'>Farshad Iqbal</div>
<div class='t' style='left:17.85px;top:43.85px;font-size:13px;font-weight:400;color:#3A3A3A;letter-spacing:-0.550px;'>File</div>
<div class='t' style='left:68.60px;top:43.85px;font-size:13px;font-weight:400;color:#333;letter-spacing:1.033px;-webkit-text-stroke:0.45px #333'>Home</div>
<div class='t' style='left:132.90px;top:43.85px;font-size:13px;font-weight:400;color:#3A3A3A;letter-spacing:0.160px;'>Insert</div>
<div class='t' style='left:194.10px;top:43.85px;font-size:13px;font-weight:400;color:#3A3A3A;letter-spacing:0.080px;'>Design</div>
<div class='t' style='left:264.40px;top:43.85px;font-size:13px;font-weight:400;color:#3A3A3A;letter-spacing:-0.190px;'>Transitions</div>
<div class='t' style='left:357.00px;top:43.85px;font-size:13px;font-weight:400;color:#3A3A3A;letter-spacing:-0.078px;'>Animations</div>
<div class='t' style='left:451.10px;top:43.85px;font-size:13px;font-weight:400;color:#3A3A3A;letter-spacing:-0.156px;'>Slide Show</div>
<div class='t' style='left:543.20px;top:43.85px;font-size:13px;font-weight:400;color:#3A3A3A;letter-spacing:-0.440px;'>Review</div>
<div class='t' style='left:611.70px;top:43.85px;font-size:13px;font-weight:400;color:#3A3A3A;letter-spacing:-0.233px;'>View</div>
<div class='t' style='left:668.20px;top:43.85px;font-size:13px;font-weight:400;color:#3A3A3A;letter-spacing:0.000px;'>Add-ins</div>
<div class='t' style='left:740.40px;top:43.85px;font-size:13px;font-weight:400;color:#3A3A3A;letter-spacing:0.233px;'>Help</div>
<div class='t' style='left:15.70px;top:107.50px;font-size:12px;font-weight:400;color:#3A3A3A;letter-spacing:-0.375px;'>Paste</div>
<div class='t' style='left:113.70px;top:108.30px;font-size:12px;font-weight:400;color:#3A3A3A;letter-spacing:0.050px;'>New</div>
<div class='t' style='left:107.40px;top:123.50px;font-size:12px;font-weight:400;color:#3A3A3A;letter-spacing:-0.100px;'>Slide</div>
<div class='t' style='left:602.70px;top:105.90px;font-size:12px;font-weight:400;color:#3A3A3A;letter-spacing:0.133px;'>Drawing</div>
<div class='t' style='left:663.60px;top:105.90px;font-size:12px;font-weight:400;color:#3A3A3A;letter-spacing:0.183px;'>Editing</div>
<div class='t' style='left:719.70px;top:107.70px;font-size:12px;font-weight:400;color:#3A3A3A;letter-spacing:0.083px;'>Dictate</div>
<div class='t' style='left:778.60px;top:107.70px;font-size:12px;font-weight:400;color:#3A3A3A;letter-spacing:-0.240px;'>Design</div>
<div class='t' style='left:782.30px;top:123.80px;font-size:12px;font-weight:400;color:#3A3A3A;letter-spacing:-0.425px;'>Ideas</div>
<div class='t' style='left:349.00px;top:74.80px;font-size:12px;font-weight:400;color:#A19F9D;letter-spacing:-0.100px;'>24</div>
<div class='t' style='left:14.70px;top:146.80px;font-size:12px;font-weight:400;color:#3A3A3A;letter-spacing:0.000px;'>Clipboard</div>
<div class='t' style='left:128.50px;top:146.80px;font-size:12px;font-weight:400;color:#3A3A3A;letter-spacing:-0.380px;'>Slides</div>
<div class='t' style='left:274.90px;top:146.80px;font-size:12px;font-weight:400;color:#3A3A3A;letter-spacing:0.300px;'>Font</div>
<div class='t' style='left:462.60px;top:146.80px;font-size:12px;font-weight:400;color:#3A3A3A;letter-spacing:-0.213px;'>Paragraph</div>
<div class='t' style='left:725.30px;top:146.80px;font-size:12px;font-weight:400;color:#3A3A3A;letter-spacing:-0.675px;'>Voice</div>
<div class='t' style='left:773.50px;top:146.80px;font-size:12px;font-weight:400;color:#3A3A3A;letter-spacing:-0.214px;'>Designer</div>
<div class='t' style='left:7.30px;top:612.02px;font-size:11.5px;font-weight:400;color:#3A3A3A;letter-spacing:-0.091px;'>Slide 1 of 1</div>
<div class='t' style='left:115.40px;top:612.02px;font-size:11.5px;font-weight:400;color:#3A3A3A;letter-spacing:-0.045px;'>English (United States)</div>
<div class='t' style='left:267.40px;top:612.02px;font-size:11.5px;font-weight:400;color:#3A3A3A;letter-spacing:-0.076px;'>Accessibility: Investigate</div>
<div class='t' style='left:477.10px;top:612.02px;font-size:11.5px;font-weight:400;color:#3A3A3A;letter-spacing:0.125px;'>Notes</div>
<div class='t' style='left:831.60px;top:610.93px;font-size:11.5px;font-weight:400;color:#3A3A3A;letter-spacing:-0.950px;'>56%</div>
</body></html>
